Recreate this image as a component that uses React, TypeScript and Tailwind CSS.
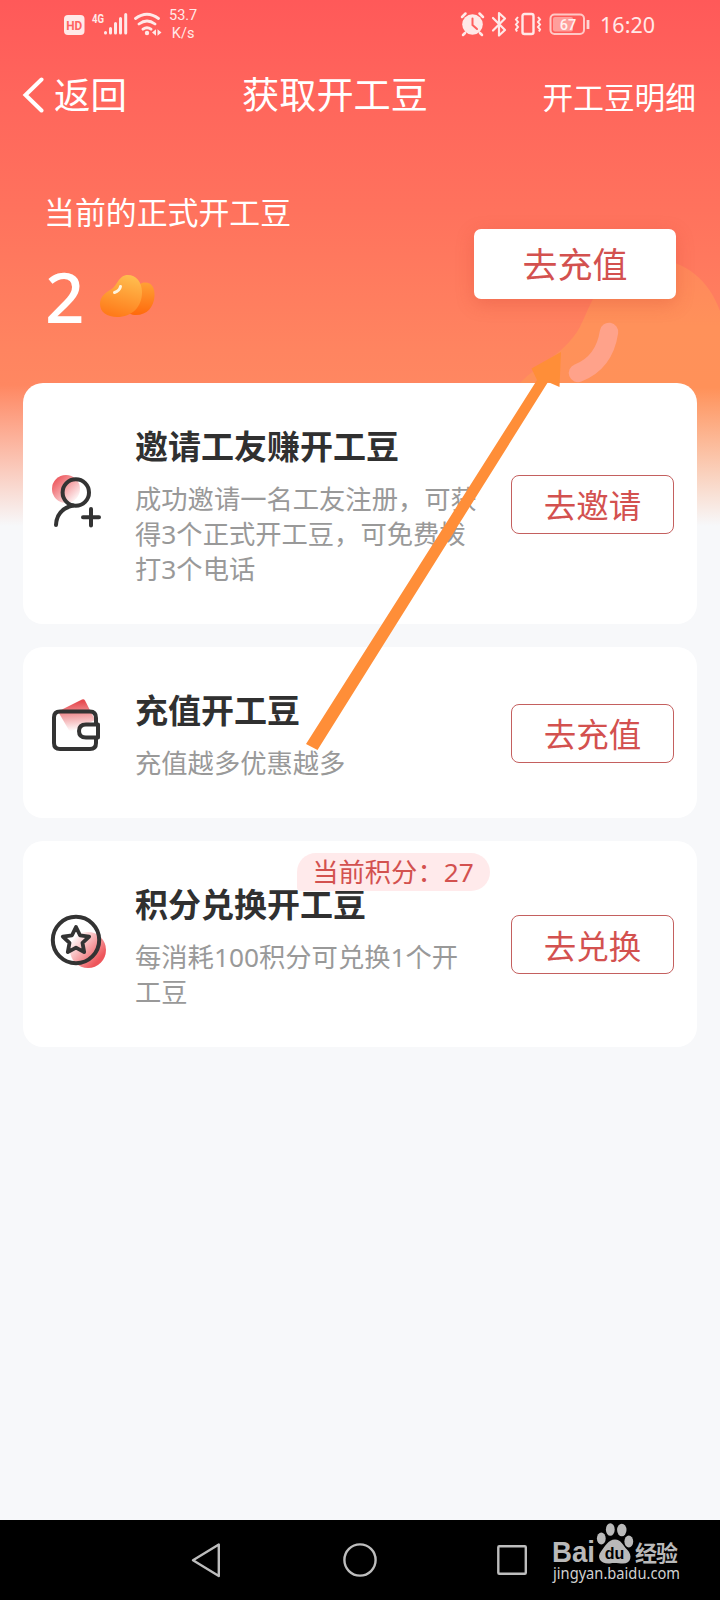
import type { ReactNode } from "react";

const FONT = "font-['Noto_Sans','Noto_Sans_CJK_SC',sans-serif]";

function InviteIcon() {
  return (
    <svg width="60" height="60" viewBox="0 0 60 60" fill="none" className="shrink-0 overflow-visible">
      <defs>
        <linearGradient id="invite" x1="8" y1="2" x2="32" y2="26" gradientUnits="userSpaceOnUse">
          <stop offset="0.1" stopColor="#ee5a60" />
          <stop offset="1" stopColor="#fff" />
        </linearGradient>
      </defs>
      <circle cx="20" cy="15" r="14" fill="url(#invite)" />
      <g stroke="#333" strokeWidth="4" strokeLinecap="round">
        <circle cx="29.8" cy="18.500" r="13.2" />
        <path d="M27 31.500C16.500 34 10.500 40.500 10 51M45 35v16.500M37 43.300h16" />
      </g>
    </svg>
  );
}

function WalletIcon() {
  return (
    <svg width="60" height="60" viewBox="0 0 60 60" fill="none" className="shrink-0 overflow-visible">
      <defs>
        <linearGradient id="wallet" x1="28" y1="-4" x2="30" y2="28" gradientUnits="userSpaceOnUse">
          <stop offset="0.1" stopColor="#e64c51" />
          <stop offset="1" stopColor="#fff" />
        </linearGradient>
      </defs>
      <path d="M12 8.500 36 -3.500q2-.8 3 1L49 17 24 29Z" fill="url(#wallet)" />
      <g stroke="#333" strokeWidth="4" strokeLinejoin="round">
        <path d="M50 20v-5q0-6.500-6-6.500H14q-6 0-6 6v25.500q0 6 6 6h30q6 0 6-6v-5" />
        <path d="M52 21.500H40q-7 0-7 6.500t7 6.500h12Z" fill="#fff" />
      </g>
    </svg>
  );
}

function PointsIcon() {
  return (
    <svg width="60" height="60" viewBox="0 0 60 60" fill="none" className="shrink-0 overflow-visible">
      <defs>
        <linearGradient id="points" x1="56" y1="48" x2="28" y2="22" gradientUnits="userSpaceOnUse">
          <stop offset="0.1" stopColor="#ee565b" />
          <stop offset="1" stopColor="#fff" />
        </linearGradient>
      </defs>
      <circle cx="42" cy="36" r="18" fill="url(#points)" />
      <circle cx="30" cy="26" r="23.200" stroke="#333" strokeWidth="4" />
      <path
        d="m30 13 4 8.300 9.200 1.300-6.700 6.300 1.700 9.200-8.200-4.500-8.200 4.500 1.700-9.200-6.700-6.300 9.200-1.300Z"
        stroke="#333"
        strokeWidth="3.800"
        strokeLinejoin="round"
      />
    </svg>
  );
}

function BeanIcon() {
  return (
    <svg width="62" height="50" viewBox="0 0 62 50" fill="none">
      <defs>
        <linearGradient id="beanFront" x1="34" y1="2" x2="22" y2="44" gradientUnits="userSpaceOnUse">
          <stop stopColor="#ffbf50" />
          <stop offset="1" stopColor="#ff7b1a" />
        </linearGradient>
        <linearGradient id="beanBack" x1="48" y1="10" x2="46" y2="42" gradientUnits="userSpaceOnUse">
          <stop stopColor="#ffa035" />
          <stop offset="1" stopColor="#ff6a0c" />
        </linearGradient>
      </defs>
      <path d="M44 10C53 8 57 14 56.500 23 56 34 49 42 38 42c-5 0-8-2-8-5C30 29 38 12 44 10Z" fill="url(#beanBack)" />
      <path
        d="M30 2C38 2 44 9 44 19 44 34 34 44 19 44 9 44 2 39 2 31 2 24 7 20 12 17 20 13 20 2 30 2Z"
        fill="url(#beanFront)"
      />
      <path d="M22.500 13.500q-1 4.500-6 6" stroke="#fff4dc" strokeWidth="3" strokeLinecap="round" />
    </svg>
  );
}

function StatusBar() {
  return (
    <div className="flex h-12 items-center justify-between pr-[65px] pl-[63px] text-[#ffe9e8]">
      <div className="flex items-center">
        <svg width="106" height="30" viewBox="0 0 106 30" fill="none">
          <rect x="1" y="6" width="20.500" height="20" rx="4" fill="#ffe9e8" />
          <text x="11.200" y="21" textAnchor="middle" textLength="16" lengthAdjust="spacingAndGlyphs" fontFamily="Roboto" fontWeight="700" fontSize="13.500" fill="#ff6361">HD</text>
          <text x="29" y="13.500" textLength="12" lengthAdjust="spacingAndGlyphs" fontFamily="Roboto" fontWeight="700" fontSize="12" fill="#ffe9e8">4G</text>
          <path
            d="M42.500 23.500v.5M47.500 19.500v4.500M52.500 14.500v9.500M57.500 9.500V24M62.700 5.500V24"
            stroke="#ffe9e8"
            strokeWidth="3"
            strokeLinecap="round"
          />
          <path
            d="M72.500 9.500q11.500-8.500 23 0M76 15q8-6 16 0M80 20.200q4-3 8 0"
            stroke="#ffe9e8"
            strokeWidth="2.800"
            strokeLinecap="round"
          />
          <circle cx="84" cy="24" r="2.200" fill="#ffe9e8" />
          <path d="m89 23.500 4-3.300v6.600ZM98.500 23.500l-4-3.300v6.600Z" fill="#ffe9e8" />
        </svg>
        <div className="pt-[2px] text-center font-[Roboto,sans-serif] text-[14.5px] leading-[18px]">
          <div>53.7</div>
          <div>K/s</div>
        </div>
      </div>
      <div className="flex items-center">
        <svg width="132" height="28" viewBox="0 0 132 28" fill="none" className="mr-[9px]">
          <circle cx="13.500" cy="14.500" r="10.300" fill="#ffe9e8" />
          <path d="m3 7 3.500-3.500M24 7l-3.500-3.500M6 23l-2 2M21 23l2 2" stroke="#ffe9e8" strokeWidth="2.500" strokeLinecap="round" />
          <path d="M13.500 8.500V15l4.500 4" stroke="#ff5f5d" strokeWidth="2" strokeLinecap="round" />
          <path d="m34 8 12 12-6 5.500V3l6 5.500-12 12" stroke="#ffe9e8" strokeWidth="2.200" strokeLinejoin="round" strokeLinecap="round" />
          <rect x="63.500" y="4" width="11" height="20" rx="2" stroke="#ffe9e8" strokeWidth="2.400" />
          <path d="m59 7-2 2.500 2 2.500-2 2.500 2 2.500-2 2.500 1 2M79 7l2 2.500-2 2.500 2 2.500-2 2.500 2 2.500-1 2" stroke="#ffe9e8" strokeWidth="2" />
          <rect x="91.500" y="4.500" width="33.500" height="19.500" rx="4" stroke="#ffc9c6" strokeWidth="2" />
          <rect x="94" y="7" width="20" height="14.500" rx="2" fill="#ff9f9c" />
          <text x="109" y="19.500" textAnchor="middle" fontFamily="Roboto" fontWeight="500" fontSize="14.500" fill="#fff1f0">67</text>
          <path d="M129 10v9" stroke="#ffd5d3" strokeWidth="2.800" />
        </svg>
        <span className="pt-px text-[21.5px] leading-7">16:20</span>
      </div>
    </div>
  );
}

type CardProps = {
  icon: ReactNode;
  title: string;
  text: string;
  action: string;
  height: string;
  badge?: string;
};

function TaskCard({ icon, title, text, action, height, badge }: CardProps) {
  return (
    <section className={`relative flex items-center rounded-[20px] bg-white px-[23px] ${height}`}>
      {icon}
      <div className="ml-[29px] w-[346px] pt-[5px]">
        <h2 className="text-[33px] leading-[44px] font-bold text-[#303030]">{title}</h2>
        <p className="mt-[13px] text-[26.3px] leading-[35px] text-[#999]">{text}</p>
      </div>
      {badge ? (
        <span className="absolute top-3 left-[274px] flex h-[38px] w-[193px] items-center justify-center rounded-[19px] rounded-bl-[4px] bg-[#ffeaeb] pr-px text-[26.3px] leading-[36px] whitespace-nowrap text-[#d3514f]">
          {badge}
        </span>
      ) : null}
      <button
        type="button"
        className="mt-px ml-auto flex h-[59px] w-[163px] items-center justify-center rounded-[8px] border border-[#c4605f] pt-[5px] text-[32.5px] text-[#d3514f]"
      >
        {action}
      </button>
    </section>
  );
}

function NavBar() {
  return (
    <footer className="relative h-20 bg-black">
      <svg width="720" height="80" viewBox="0 0 720 80" fill="none">
        <g stroke="#bdbdbd" strokeWidth="2.400" strokeLinejoin="round">
          <path d="M218.800 24.500v31.500L193 40.200Z" />
          <circle cx="360" cy="40" r="15.600" />
          <rect x="498.300" y="26.300" width="27.500" height="27.500" rx="1" />
        </g>
        <g fill="#b9b9b9">
          <text x="552" y="42" textLength="43" lengthAdjust="spacingAndGlyphs" fontFamily="Liberation Sans" fontWeight="700" fontSize="29.500">Bai</text>
          <ellipse cx="601.300" cy="18.500" rx="4.400" ry="6" />
          <ellipse cx="610.300" cy="9.500" rx="4.400" ry="6.300" />
          <ellipse cx="621.800" cy="10" rx="4.700" ry="6.300" />
          <ellipse cx="628.800" cy="21.500" rx="4.400" ry="6" />
          <path d="M615 19.500c6 0 8 6 12 10 6 6 4 14-4 14-4 0-9-1-13 0-9 1-14-6-9-12 4-5 7-12 14-12Z" />
          <text x="635" y="41" fontFamily="Noto Sans CJK SC" fontWeight="700" fontSize="22" textLength="43">经验</text>
          <text x="553" y="58.500" fill="#d0d0d0" fontFamily="Noto Sans" fontSize="16" textLength="127" lengthAdjust="spacingAndGlyphs">jingyan.baidu.com</text>
        </g>
        <text x="614.500" y="39" textAnchor="middle" fill="#000" fontFamily="Liberation Sans" fontWeight="700" fontSize="16">du</text>
      </svg>
    </footer>
  );
}

export default function App() {
  return (
    <div className={`relative flex h-[1600px] w-[720px] flex-col overflow-hidden bg-[#f7f8fa] ${FONT}`}>
      <div className="absolute inset-x-0 top-0 h-[530px] bg-[linear-gradient(180deg,#ff5959_0px,#ff665c_100px,#ff725d_210px,#ff8460_350px,#ff8761_385px,#f7f8fa_526px)]" />
      {/* large bean behind the first card */}
      <svg width="240" height="290" viewBox="480 240 240 290" fill="none" className="absolute top-[240px] right-0">
        <defs>
          <linearGradient id="bigBean" x1="0" y1="260" x2="0" y2="526" gradientUnits="userSpaceOnUse">
            <stop stopColor="#ff875c" />
            <stop offset="0.25" stopColor="#ff915a" />
            <stop offset="0.48" stopColor="#ff9159" />
            <stop offset="1" stopColor="#f7f8fa" />
          </linearGradient>
        </defs>
        <path d="M510 395C532 364 562 359 580 327 592 304 602 260 655 260 685 260 709 280 720 311V526H660Z" fill="url(#bigBean)" />
        <path d="M609 332C606 352 596 366 578 373" stroke="#ffa28a" strokeWidth="18.500" strokeLinecap="round" />
      </svg>

      <div className="relative flex flex-1 flex-col">
        <StatusBar />
        <header className="flex h-[94px] items-center pr-6 pl-[22px] text-white">
          <div className="flex w-[153px] items-center">
            <svg width="22" height="38" viewBox="0 0 22 38" fill="none" className="mr-[10px]">
              <path d="M19.500 3.500 3.500 19l16 15.500" stroke="#fff" strokeWidth="4" strokeLinecap="round" />
            </svg>
            <span className="text-[36.4px] leading-[50px]">返回</span>
          </div>
          <h1 className="ml-[67px] text-[37.2px] leading-[50px]">获取开工豆</h1>
          <span className="ml-auto pt-[5px] text-[30.7px]">开工豆明细</span>
        </header>

        <div className="flex h-[241px] items-start justify-between pr-[44px] pl-[45px] text-white">
          <div className="pt-[47px]">
            <p className="-ml-px text-[30.9px] leading-[46px]">当前的正式开工豆</p>
            <div className="mt-[24px] flex items-center">
              <span className="w-[37px] text-[69px] leading-[74px] font-medium">2</span>
              <div className="mt-[3px] ml-[16px]">
                <BeanIcon />
              </div>
            </div>
          </div>
          <button
            type="button"
            className="mt-[87px] flex h-[70px] w-[202px] items-center justify-center rounded-[7px] bg-white pt-[3px] text-[35px] text-[#d3514f] shadow-[0_5px_18px_rgba(200,60,40,0.25)]"
          >
            去充值
          </button>
        </div>

        <main className="flex flex-col gap-[23px] px-[23px]">
          <TaskCard
            icon={<InviteIcon />}
            title="邀请工友赚开工豆"
            text="成功邀请一名工友注册，可获得3个正式开工豆，可免费拨打3个电话"
            action="去邀请"
            height="h-[241px]"
          />
          <TaskCard icon={<WalletIcon />} title="充值开工豆" text="充值越多优惠越多" action="去充值" height="h-[171px]" />
          <TaskCard
            icon={<PointsIcon />}
            title="积分兑换开工豆"
            text="每消耗100积分可兑换1个开工豆"
            action="去兑换"
            height="h-[206px]"
            badge="当前积分：27"
          />
        </main>
      </div>

      <NavBar />

      <svg width="270" height="410" viewBox="300 345 270 410" className="pointer-events-none absolute top-[345px] left-[300px]">
        <path d="M306 744 537 380 531.500 368.500 561 352 559.500 387 548 382 317.500 750Z" fill="#ff8e38" />
      </svg>
    </div>
  );
}
